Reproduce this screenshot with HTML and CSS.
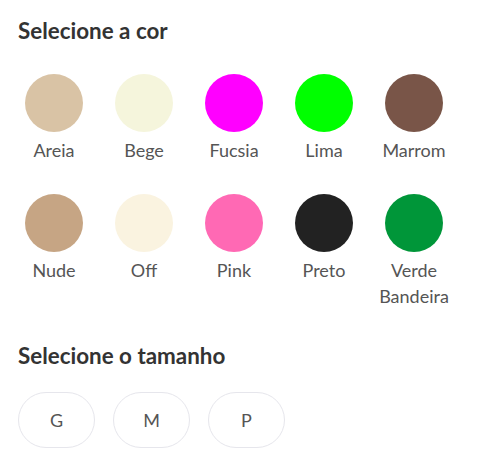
FILE: index.html
```html
<!DOCTYPE html>
<html lang="pt-BR">
<head>
    <meta charset="UTF-8">
    <meta name="viewport" content="width=device-width, initial-scale=1.0">
    <title>Seleção de variação</title>
    <link rel="stylesheet" href="styles.css">
</head>
<body>
    <div class="variant-picker">
        <h2 class="picker-title">Selecione a cor</h2>
        <div class="color-grid">
            <div class="color-option"><span class="swatch" style="background-color: #d9c3a5"></span><span class="color-name">Areia</span></div>
            <div class="color-option"><span class="swatch" style="background-color: #f5f5dc"></span><span class="color-name">Bege</span></div>
            <div class="color-option"><span class="swatch" style="background-color: #ff00ff"></span><span class="color-name">Fucsia</span></div>
            <div class="color-option"><span class="swatch" style="background-color: #00ff00"></span><span class="color-name">Lima</span></div>
            <div class="color-option"><span class="swatch" style="background-color: #795548"></span><span class="color-name">Marrom</span></div>
            <div class="color-option"><span class="swatch" style="background-color: #c6a584"></span><span class="color-name">Nude</span></div>
            <div class="color-option"><span class="swatch" style="background-color: #faf3e0"></span><span class="color-name">Off</span></div>
            <div class="color-option"><span class="swatch" style="background-color: #ff69b4"></span><span class="color-name">Pink</span></div>
            <div class="color-option"><span class="swatch" style="background-color: #222222"></span><span class="color-name">Preto</span></div>
            <div class="color-option"><span class="swatch" style="background-color: #009639"></span><span class="color-name">Verde Bandeira</span></div>
        </div>

        <h2 class="picker-title size-title">Selecione o tamanho</h2>
        <div class="size-list">
            <button class="size-btn">G</button>
            <button class="size-btn">M</button>
            <button class="size-btn">P</button>
        </div>
    </div>
</body>
</html>
```

FILE: styles.css
```css
body {
    font-family: "Lato", sans-serif;
    margin: 0;
    padding: 0;
    background-color: #ffffff;
    color: #333333;
}

.variant-picker {
    padding: 18px 18px;
}

.picker-title {
    margin: 0;
    font-size: 22.4px;
    line-height: 26px;
    font-weight: 700;
    color: #333333;
}

.size-title {
    margin-top: 34px;
}

.color-grid {
    display: grid;
    grid-template-columns: repeat(5, 72px);
    column-gap: 18px;
    row-gap: 31px;
    margin-top: 30px;
}

.color-option {
    display: flex;
    flex-direction: column;
    align-items: center;
    cursor: pointer;
}

.swatch {
    display: block;
    width: 58px;
    height: 58px;
    border-radius: 50%;
}

.color-name {
    margin-top: 5px;
    font-size: 18px;
    line-height: 26px;
    color: #555555;
    text-align: center;
}

.size-list {
    display: flex;
    gap: 18px;
    margin-top: 23px;
}

.size-btn {
    width: 77px;
    height: 56px;
    border: 1px solid #e6e6ec;
    border-radius: 28px;
    background-color: #ffffff;
    font-family: "Lato", sans-serif;
    font-size: 18px;
    color: #555555;
    cursor: pointer;
}
```
